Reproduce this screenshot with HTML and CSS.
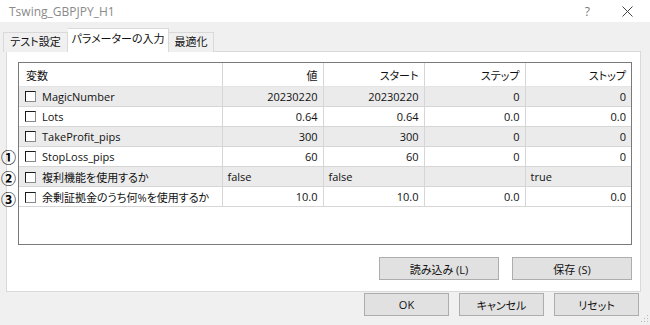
FILE: index.html
```html
<!DOCTYPE html>
<html lang="ja">
<head>
    <meta charset="UTF-8">
    <title>Tswing_GBPJPY_H1</title>
    <link rel="stylesheet" href="styles.css">
</head>
<body>
    <div class="window">
        <div class="titlebar">
            <span class="title">Tswing_GBPJPY_H1</span>
            <span class="help">?</span>
            <svg class="close" width="11" height="11" viewBox="0 0 11 11">
                <path d="M0.5 0.5 L10.5 10.5 M10.5 0.5 L0.5 10.5" stroke="#444" stroke-width="1" fill="none"/>
            </svg>
        </div>

        <div class="tabs">
            <div class="tab t-test">テスト設定</div>
            <div class="tab t-param active">パラメーターの入力</div>
            <div class="tab t-opt">最適化</div>
        </div>

        <div class="panel">
            <div class="grid-box">
                <table class="params">
                    <colgroup>
                        <col class="c-name">
                        <col class="c-num">
                        <col class="c-num">
                        <col class="c-num">
                        <col>
                    </colgroup>
                    <thead>
                        <tr>
                            <th class="left">変数</th>
                            <th>値</th>
                            <th>スタート</th>
                            <th>ステップ</th>
                            <th>ストップ</th>
                        </tr>
                    </thead>
                    <tbody>
                        <tr class="alt">
                            <td class="name"><span class="check"></span>MagicNumber</td>
                            <td>20230220</td><td>20230220</td><td>0</td><td>0</td>
                        </tr>
                        <tr>
                            <td class="name"><span class="check"></span>Lots</td>
                            <td>0.64</td><td>0.64</td><td>0.0</td><td>0.0</td>
                        </tr>
                        <tr class="alt">
                            <td class="name"><span class="check"></span>TakeProfit_pips</td>
                            <td>300</td><td>300</td><td>0</td><td>0</td>
                        </tr>
                        <tr>
                            <td class="name"><span class="check"></span>StopLoss_pips</td>
                            <td>60</td><td>60</td><td>0</td><td>0</td>
                        </tr>
                        <tr class="alt">
                            <td class="name"><span class="check"></span>複利機能を使用するか</td>
                            <td class="left">false</td><td class="left">false</td><td></td><td class="left">true</td>
                        </tr>
                        <tr>
                            <td class="name"><span class="check"></span>余剰証拠金のうち何%を使用するか</td>
                            <td>10.0</td><td>10.0</td><td>0.0</td><td>0.0</td>
                        </tr>
                    </tbody>
                </table>

                <!-- hand-drawn annotation marks -->
                <div class="marks">
                    <span>①</span>
                    <span>②</span>
                    <span>③</span>
                </div>
            </div>

            <div class="file-buttons">
                <button class="btn wide">読み込み (L)</button>
                <button class="btn wide">保存 (S)</button>
            </div>
        </div>

        <div class="dialog-buttons">
            <button class="btn">OK</button>
            <button class="btn">キャンセル</button>
            <button class="btn">リセット</button>
        </div>

        <svg class="grip" width="9" height="9" viewBox="0 0 9 9">
            <rect x="7" y="1" width="1" height="1" fill="#bbb"/>
            <rect x="4" y="4" width="1" height="1" fill="#bbb"/>
            <rect x="7" y="4" width="1" height="1" fill="#bbb"/>
            <rect x="1" y="7" width="1" height="1" fill="#bbb"/>
            <rect x="4" y="7" width="1" height="1" fill="#bbb"/>
            <rect x="7" y="7" width="1" height="1" fill="#bbb"/>
        </svg>
    </div>
</body>
</html>
```

FILE: styles.css
```css
body {
    margin: 0;
    background-color: #f0f0f0;
    font-family: "Open Sans", "Noto Sans CJK JP", sans-serif;
    font-size: 11px;
    font-feature-settings: "palt";
    color: #111;
}

.window {
    position: relative;
    width: 650px;
    height: 325px;
    overflow: hidden;
}

/* title bar */

.titlebar {
    height: 22px;
    display: flex;
    align-items: center;
    padding: 0 17px 0 9px;
    background-color: #fff;
}

.title {
    color: #8a8a8a;
    font-size: 12px;
}

.help {
    margin-left: auto;
    margin-right: 32px;
    font-size: 12px;
    color: #777;
}

/* tabs */

.tabs {
    display: flex;
    align-items: flex-end;
    height: 23px;
    margin-top: 7px;
    padding-left: 3px;
    position: relative;
    z-index: 1;
    margin-bottom: -1px;
}

.tab {
    box-sizing: border-box;
    height: 20px;
    line-height: 18px;
    text-align: center;
    border: 1px solid #d9d9d9;
    border-bottom: none;
    background-color: #f0f0f0;
}

.t-test { width: 65px; }
.t-param { width: 101px; }
.t-opt { width: 45px; }

.tab.t-opt {
    border-left: none;
}

.tab.active {
    height: 24px;
    line-height: 20px;
    padding-bottom: 2px;
    background-color: #fff;
    border-left: none;
}

/* panel */

.panel {
    box-sizing: border-box;
    width: 635px;
    height: 241px;
    margin-left: 6px;
    padding: 10px 8px 0 11px;
    background-color: #fff;
    border: 1px solid #d9d9d9;
}

.grid-box {
    position: relative;
    box-sizing: border-box;
    height: 183px;
    border: 1px solid #7a7a7a;
}

.params {
    width: 100%;
    table-layout: fixed;
    border-collapse: collapse;
}

.c-name { width: 203px; }
.c-num { width: 101px; }

.params th,
.params td {
    height: 19px;
    padding: 0 5px;
    text-align: right;
    font-weight: normal;
    white-space: nowrap;
    overflow: hidden;
    border-right: 1px solid #d6d6d6;
    border-bottom: 1px solid #d6d6d6;
}

.params th {
    height: 23px;
    border-bottom-color: #e4e4e4;
}

.params th:last-child,
.params td:last-child {
    border-right: none;
}

.params .left {
    text-align: left;
}

.params .name {
    text-align: left;
    padding-left: 6px;
}

.params th.left {
    padding-left: 7px;
}

.params tr.alt td {
    background-color: #ebebeb;
}

.check {
    display: inline-block;
    box-sizing: border-box;
    width: 11px;
    height: 11px;
    margin-right: 6px;
    vertical-align: -1px;
    background-color: #fff;
    border: 1px solid #1a1a1a;
    border-right-color: #8a8a8a;
    border-bottom-color: #8a8a8a;
}

.marks {
    position: absolute;
    left: -18px;
    top: 86px;
    display: flex;
    flex-direction: column;
    gap: 5px;
    font-family: "Noto Sans CJK JP", sans-serif;
    font-size: 15px;
    font-weight: bold;
    line-height: 16px;
    color: #000;
}

/* buttons */

.file-buttons,
.dialog-buttons {
    display: flex;
    justify-content: flex-end;
}

.file-buttons {
    gap: 13px;
    margin-top: 12px;
}

.dialog-buttons {
    gap: 10px;
    margin-top: 1px;
    margin-right: 11px;
}

.btn {
    box-sizing: border-box;
    width: 85px;
    height: 23px;
    padding: 0;
    font-family: inherit;
    font-size: 11px;
    font-feature-settings: "palt";
    color: #111;
    background-color: #e1e1e1;
    border: 1px solid #adadad;
}

.btn.wide {
    width: 120px;
}

.grip {
    position: absolute;
    right: 1px;
    bottom: 2px;
}
```
